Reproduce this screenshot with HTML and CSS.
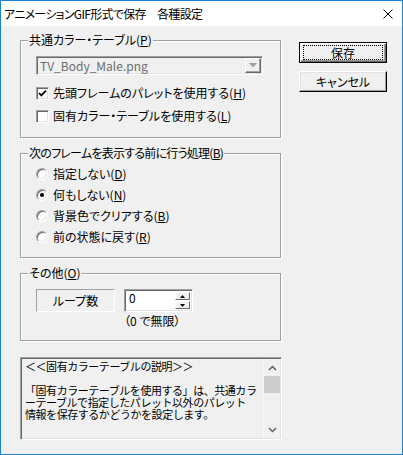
FILE: index.html
```html
<!DOCTYPE html>
<html lang="ja">
<head>
<meta charset="utf-8">
<title>アニメーションGIF形式で保存　各種設定</title>
<link rel="stylesheet" href="styles.css">
</head>
<body>
<div class="window">
  <div class="titlebar">
    <span class="title">アニメーションGIF形式で保存　各種設定</span>
    <svg class="close" width="10" height="10" viewBox="0 0 10 10"><path d="M0.5 0.5 L9.5 9.5 M9.5 0.5 L0.5 9.5" stroke="#000" stroke-width="1" fill="none"/></svg>
  </div>
  <div class="client">
    <div class="left">
      <fieldset class="group g1">
        <legend>共通カラー・テーブル(<u>P</u>)</legend>
        <div class="combo">
          <span class="combo-text">TV_Body_Male.png</span>
          <span class="combo-btn"><svg width="8" height="5" viewBox="0 0 8 5"><path d="M0 0 H8 L4 4.5 Z" fill="#a0a0a0"/></svg></span>
        </div>
        <label class="row check-row r1"><span class="checkbox"><svg width="11" height="11" viewBox="0 0 11 11"><path d="M2 5 L4.3 7.4 L9 2.6" stroke="#000" stroke-width="1.8" fill="none"/></svg></span>先頭フレームのパレットを使用する(<u>H</u>)</label>
        <label class="row check-row r2"><span class="checkbox"></span>固有カラー・テーブルを使用する(<u>L</u>)</label>
      </fieldset>
      <fieldset class="group g2">
        <legend class="tight">次のフレームを表示する前に行う処理(<u>B</u>)</legend>
        <div class="radio-list">
          <label class="row radio-row"><span class="radio"></span>指定しない(<u>D</u>)</label>
          <label class="row radio-row"><span class="radio on"></span>何もしない(<u>N</u>)</label>
          <label class="row radio-row"><span class="radio"></span>背景色でクリアする(<u>B</u>)</label>
          <label class="row radio-row"><span class="radio"></span>前の状態に戻す(<u>R</u>)</label>
        </div>
      </fieldset>
      <fieldset class="group g3">
        <legend>その他(<u>O</u>)</legend>
        <div class="loop">
          <span class="static">ループ数</span>
          <div class="spin-wrap">
            <div class="spin">
              <span class="spin-value">0</span>
              <span class="spin-btns">
                <span class="spin-btn"><svg width="5" height="3" viewBox="0 0 5 3"><path d="M2.5 0 L5 3 H0 Z" fill="#000"/></svg></span>
                <span class="spin-btn"><svg width="5" height="3" viewBox="0 0 5 3"><path d="M0 0 H5 L2.5 3 Z" fill="#000"/></svg></span>
              </span>
            </div>
            <div class="spin-note">（0 で無限）</div>
          </div>
        </div>
      </fieldset>
      <div class="memo">
        <div class="memo-text">
          <div class="ml">＜＜固有カラーテーブルの説明＞＞</div>
          <div class="ml"></div>
          <div class="ml">「固有カラーテーブルを使用する」は、共通カラ</div>
          <div class="ml">ーテーブルで指定したパレット以外のパレット</div>
          <div class="ml">情報を保存するかどうかを設定します。</div>
        </div>
        <div class="scrollbar">
          <span class="sb-arrow"><svg width="9" height="6" viewBox="0 0 9 6"><path d="M1 5 L4.5 1.5 L8 5" stroke="#606060" stroke-width="1.5" fill="none"/></svg></span>
          <span class="sb-thumb"></span>
          <span class="sb-space"></span>
          <span class="sb-arrow"><svg width="9" height="6" viewBox="0 0 9 6"><path d="M1 1 L4.5 4.5 L8 1" stroke="#606060" stroke-width="1.5" fill="none"/></svg></span>
        </div>
      </div>
    </div>
    <div class="right">
      <button class="btn default"><span class="focus">保存</span></button>
      <button class="btn">キャンセル</button>
    </div>
  </div>
</div>
</body>
</html>
```
FILE: styles.css
```css
* { box-sizing: border-box; }

body {
  margin: 0;
  background: #ffffff;
  font-family: "Noto Sans CJK JP", "Noto Sans", sans-serif;
  font-size: 12px;
  color: #000;
  font-feature-settings: "palt";
}

.window {
  width: 403px;
  height: 455px;
  border: 1px solid #1883d7;
  background: #f0f0f0;
  display: flex;
  flex-direction: column;
}

.titlebar {
  height: 25px;
  flex: none;
  background: #fff;
  display: flex;
  align-items: center;
  justify-content: space-between;
  padding: 0 9px 0 3px;
}

.title {
  line-height: 14px;
  font-size: 12px;
  letter-spacing: -0.7px;
}

.close { display: block; }

.client {
  flex: 1;
  display: flex;
  align-items: flex-start;
  padding: 7px 0 0 19px;
  gap: 17px;
}

.left {
  width: 262px;
  display: flex;
  flex-direction: column;
}

.group {
  margin: 0;
  padding: 0;
  width: 261px;
  min-width: 0;
  border: 1px solid #a0a0a0;
  box-shadow: 1px 1px 0 #fff, inset 1px 1px 0 #fff;
}

.group legend {
  margin-left: 7px;
  padding: 0 1px;
  line-height: 14px;
  height: 14px;
  background: #f0f0f0;
}

.group legend.tight { letter-spacing: -0.75px; }

u { text-decoration: underline; text-underline-offset: 1px; }

.g1 { padding-bottom: 10px; }
.g2 { margin-top: 8px; padding-bottom: 10px; }
.g3 { margin-top: 8px; padding-bottom: 12px; }

/* combo box */
.combo {
  margin: 9px 17px 0 15px;
  height: 19px;
  display: flex;
  border: 1px solid;
  border-color: #a0a0a0 #ffffff #ffffff #a0a0a0;
  box-shadow: inset 1px 1px 0 #696969, inset -1px -1px 0 #e3e3e3;
  padding: 1px 1px 1px 2px;
}

.combo-text {
  flex: 1;
  color: #6d6d6d;
  line-height: 15px;
  padding-left: 1px;
}

.combo-btn {
  width: 16px;
  height: 15px;
  border: 1px solid;
  border-color: #ffffff #696969 #696969 #ffffff;
  box-shadow: inset -1px -1px 0 #a0a0a0;
  background: #f0f0f0;
  display: flex;
  align-items: center;
  justify-content: center;
}

/* rows */
.row {
  display: flex;
  align-items: center;
  margin-left: 15px;
  line-height: 14px;
  white-space: nowrap;
}

.check-row { height: 22px; }
.r1 { margin-top: 7px; }
.r2 { margin-top: 1px; }

.checkbox {
  width: 13px;
  height: 13px;
  margin-right: 4px;
  background: #fff;
  border: 1px solid;
  border-color: #a0a0a0 #ffffff #ffffff #a0a0a0;
  box-shadow: inset 1px 1px 0 #696969, inset -1px -1px 0 #e3e3e3;
  flex: none;
}

.checkbox svg { display: block; }

.radio-list { padding-top: 3px; }
.radio-row { height: 21px; }

.radio {
  width: 12px;
  height: 12px;
  margin-right: 5px;
  flex: none;
  border-radius: 50%;
  background: #fff;
  border: 1px solid;
  border-color: #a0a0a0 #ffffff #ffffff #a0a0a0;
  box-shadow: inset 1px 1px 0 #696969, inset -1px -1px 0 #e3e3e3;
  display: flex;
  align-items: center;
  justify-content: center;
}

.radio.on::after {
  content: "";
  width: 4px;
  height: 4px;
  border-radius: 50%;
  background: #000;
}

/* loop */
.loop {
  display: flex;
  align-items: flex-start;
  margin: 9px 0 0 15px;
}

.static {
  width: 79px;
  height: 23px;
  border: 1px solid;
  border-color: #a0a0a0 #ffffff #ffffff #a0a0a0;
  display: flex;
  align-items: center;
  justify-content: center;
  line-height: 14px;
}

.spin-wrap { margin-left: 9px; }

.spin {
  width: 69px;
  height: 23px;
  background: #fff;
  border: 1px solid;
  border-color: #a0a0a0 #ffffff #ffffff #a0a0a0;
  box-shadow: inset 1px 1px 0 #696969, inset -1px -1px 0 #e3e3e3;
  display: flex;
  padding: 1px;
}

.spin-value {
  flex: 1;
  padding: 0 0 0 3px;
  line-height: 14px;
}

.spin-btns {
  width: 16px;
  display: flex;
  flex-direction: column;
  gap: 1px;
  padding: 1px 1px 1px 0;
}

.spin-btn {
  flex: 1;
  border: 1px solid;
  border-color: #ffffff #696969 #696969 #ffffff;
  background: #f0f0f0;
  display: flex;
  align-items: center;
  justify-content: center;
}

.spin-btn svg { display: block; }

.spin-note {
  margin-top: 2px;
  line-height: 14px;
  white-space: nowrap;
}

/* memo */
.memo {
  margin-top: 16px;
  width: 262px;
  height: 83px;
  display: flex;
  border: 1px solid;
  border-color: #a0a0a0 #ffffff #ffffff #a0a0a0;
  box-shadow: inset 1px 1px 0 #696969, inset -1px -1px 0 #e3e3e3;
  padding: 1px;
}

.memo-text {
  flex: 1;
  font-size: 11px;
  letter-spacing: -0.45px;
  padding: 1px 0 0 3px;
  white-space: nowrap;
  overflow: hidden;
  font-feature-settings: normal;
}

.ml {
  height: 12px;
  line-height: 12px;
}

.scrollbar {
  width: 17px;
  flex: none;
  display: flex;
  flex-direction: column;
  border-left: 1px solid #fafafa;
}

.sb-arrow {
  height: 17px;
  display: flex;
  align-items: center;
  justify-content: center;
}

.sb-arrow svg { display: block; }

.sb-thumb {
  height: 17px;
  background: #cdcdcd;
}

.sb-space { flex: 1; }

/* buttons */
.right {
  width: 88px;
  margin-top: 9px;
  display: flex;
  flex-direction: column;
  gap: 8px;
}

.btn {
  font: inherit;
  font-size: 12px;
  line-height: 14px;
  color: #000;
  width: 88px;
  height: 21px;
  margin: 0;
  padding: 0;
  background: #f0f0f0;
  border: 1px solid;
  border-color: #ffffff #000000 #000000 #ffffff;
  box-shadow: inset -1px -1px 0 #a0a0a0, inset 1px 1px 0 #e3e3e3;
  display: flex;
  align-items: center;
  justify-content: center;
}

.btn.default {
  border-color: #000;
  box-shadow: inset 1px 1px 0 #fff, inset -1px -1px 0 #696969, inset -2px -2px 0 #a0a0a0;
  padding: 2px 3px;
}

.focus {
  flex: 1;
  align-self: stretch;
  border: 1px dotted #000;
  display: flex;
  align-items: center;
  justify-content: center;
}
```
